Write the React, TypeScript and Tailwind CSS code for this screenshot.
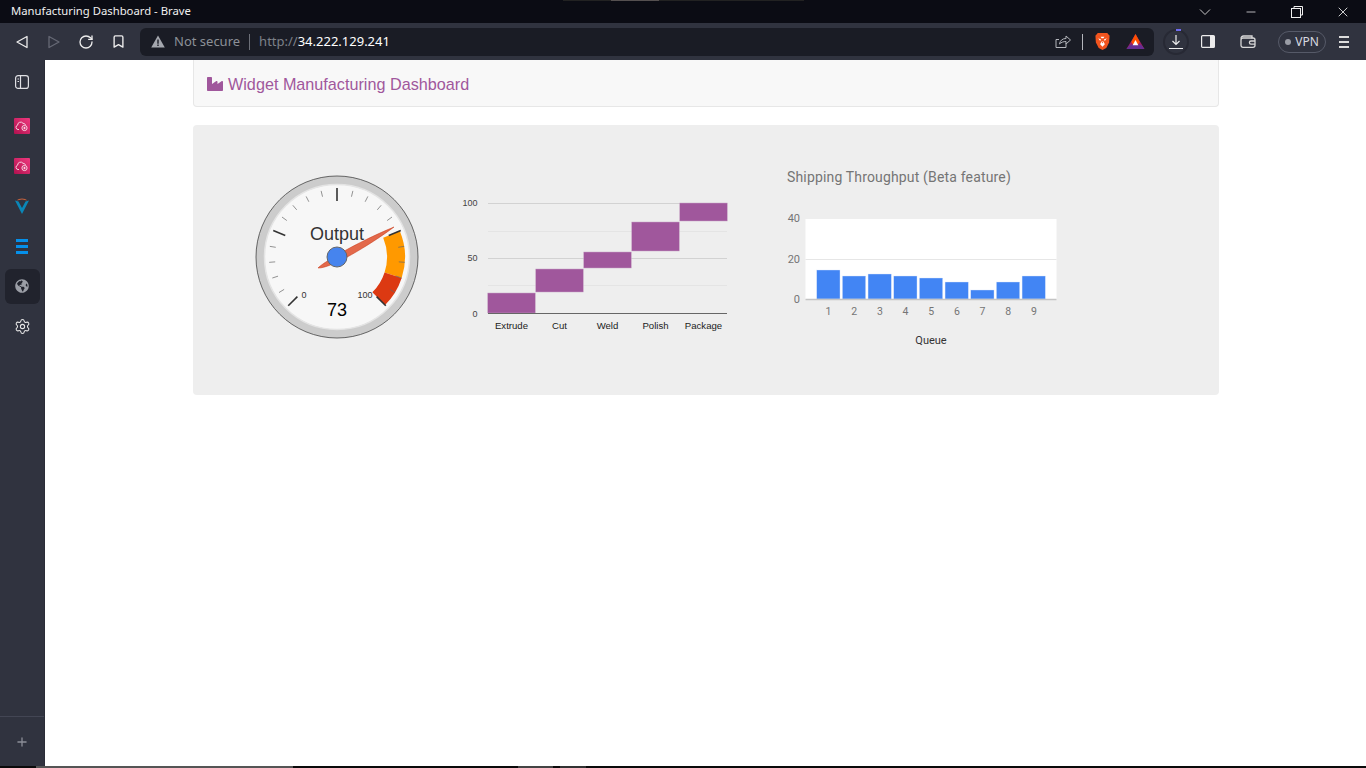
import { Bookmark, Minus, Plus, RotateCw, Settings, X } from "lucide-react";
import { FaGlobeAmericas, FaIndustry } from "react-icons/fa";

const UI_FONT = "[font-family:'Noto_Sans','Open_Sans',sans-serif]";

const waterfall = [
  { label: "Extrude", x: 488, top: 293, bottom: 313 },
  { label: "Cut", x: 536, top: 269, bottom: 292 },
  { label: "Weld", x: 584, top: 252, bottom: 268 },
  { label: "Polish", x: 632, top: 222, bottom: 251 },
  { label: "Package", x: 680, top: 203, bottom: 221 },
];

const queue = [15, 12, 13, 12, 11, 9, 5, 9, 12];

function ToolButton({ children }: { children: React.ReactNode }) {
  return <div className="flex h-8 w-8 shrink-0 items-center justify-center">{children}</div>;
}

function AwsIcon() {
  return (
    <div className="flex h-4 w-4 items-center justify-center rounded-[1px] bg-gradient-to-tr from-[#b0104f] to-[#f0387f]">
      <svg viewBox="0 0 16 16" className="h-4 w-4" fill="none" stroke="#f7d3e2" strokeWidth="1">
        <path d="M5 11.500H4a2.200 2.200 0 0 1-.4-4.300A3 3 0 0 1 9 5.300a2.500 2.500 0 0 1 2.500 1.700" />
        <circle cx="10.500" cy="10" r="2.600" />
        <path d="M9.300 10h2.400M10.500 8.800v2.400" />
      </svg>
    </div>
  );
}

function SideItem({ children, active }: { children: React.ReactNode; active?: boolean }) {
  return (
    <div className="flex h-10 items-center justify-center">
      <div className={`flex h-[35px] w-[35px] items-center justify-center rounded-md ${active ? "bg-[#21232d]" : ""}`}>
        {children}
      </div>
    </div>
  );
}

function TitleBar() {
  return (
    <div className={`relative flex h-[23px] items-center bg-[#0b0c14] pl-[11px] text-[11.300px] text-[#f0f0f0] ${UI_FONT}`}>
      <div className="absolute left-[563px] top-0 h-px w-[241px] bg-[#222222]" />
      <div className="absolute left-[611px] top-0 h-px w-[48px] bg-[#555050]" />
      <span className="flex-1 whitespace-nowrap">Manufacturing Dashboard - Brave</span>
      <svg viewBox="0 0 12 8" className="mr-[33px] h-2 w-3" fill="none" stroke="#c8c8c8" strokeWidth="1">
        <path d="M1 1.500 6 6.500l5-5" />
      </svg>
      <Minus size={14} strokeWidth={1.2} className="mr-[33px] text-white" />
      <svg viewBox="0 0 12 12" className="mr-[32px] h-3 w-3" fill="none" stroke="#f0f0f0" strokeWidth="1">
        <rect x="0.500" y="2.500" width="9" height="9" />
        <path d="M3 2.500V.500h8.500V9H9.500" />
      </svg>
      <X size={16} strokeWidth={1.2} className="mr-[15px] text-white" />
    </div>
  );
}

function ToolBar() {
  return (
    <div className={`flex h-[37px] items-center bg-[#30333f] pl-[6px] ${UI_FONT}`}>
      <ToolButton>
        <svg viewBox="0 0 14 14" className="h-[14px] w-[14px]" fill="none" stroke="#ececec" strokeWidth="1.300" strokeLinejoin="round">
          <path d="M12 1.500v11L2 7z" />
        </svg>
      </ToolButton>
      <ToolButton>
        <svg viewBox="0 0 14 14" className="h-[14px] w-[14px]" fill="none" stroke="#666975" strokeWidth="1.300" strokeLinejoin="round">
          <path d="M2 1.500v11L12 7z" />
        </svg>
      </ToolButton>
      <ToolButton>
        <RotateCw size={16} strokeWidth={2} className="text-[#ececec]" />
      </ToolButton>
      <ToolButton>
        <Bookmark size={15} strokeWidth={2.2} className="text-[#ececec]" />
      </ToolButton>

      <div className="ml-[6px] flex h-7 w-[1014px] shrink-0 items-center rounded-md bg-[#1a1c25] pl-[11px] text-[13px]">
        <svg viewBox="0 0 14 13" className="h-[13px] w-[14px]" fill="#a4a7ae">
          <path d="M7 .500 13.800 12.500H.200z" />
          <path d="M6.300 4.500h1.400v4.200H6.300zM6.300 9.600h1.400V11H6.300z" fill="#1a1c25" />
        </svg>
        <span className="ml-[9px] whitespace-nowrap text-[#8c9097]">Not secure</span>
        <div className="ml-[9px] h-[16px] w-px bg-[#6c6f78]" />
        <span className="ml-[9px] whitespace-nowrap text-[#7d8189]">http://</span>
        <span className="whitespace-nowrap text-white">34.222.129.241</span>

        <div className="ml-auto flex items-center">
          <svg viewBox="0 0 16 15" className="h-[15px] w-4" fill="none" stroke="#b4b6bc" strokeWidth="1">
            <path d="M11 9.500v4H1v-8h3" />
            <path d="M4.500 10c.5-3.500 3-5.500 6.500-5.500V2l4.500 4-4.500 4V7.500c-2.500 0-5 .8-6.500 2.500z" />
          </svg>
          <div className="ml-[11px] h-[16px] w-px bg-[#b4b6bc]" />
          <svg viewBox="0 0 18 20" className="ml-[11px] h-[19px] w-[17px]">
            <path d="M4 1h10l2.500 3-.5 7-3 6-4 2-4-2-3-6-.5-7z" fill="#f1541e" />
            <path d="M4.500 6.500 7.500 8 6.500 9.500zM13.500 6.500 10.500 8l1 1.500zM7 5h4l-1 1.500H8z" fill="#ffffff" />
            <path d="M8 10h2l1.500 3L9 15.500 6.500 13z" fill="#ffffff" />
            <path d="M8.200 10.500h1.600L9 12z" fill="#f1541e" />
          </svg>
          <svg viewBox="0 0 20 18" className="ml-[15px] mr-[9px] h-[17px] w-[19px]">
            <path d="M10 1 19.500 17H.500z" fill="#9e1f63" />
            <path d="M10 1 5.500 9.500 8 13h4l2.500-3.500z" fill="#ff5000" />
            <path d="M.500 17 4 12.500h12l3.500 4.500z" fill="#662d91" />
            <path d="M10 7.500 13 13H7z" fill="#ffffff" />
          </svg>
        </div>
      </div>

      <div className="ml-[6px] flex h-8 w-8 shrink-0 items-center justify-center">
        <div className="relative flex h-[26px] w-[26px] items-center justify-center rounded-full border-2 border-[#272934]">
          <svg viewBox="0 0 16 16" className="h-4 w-4" fill="none" stroke="#ececec" strokeWidth="1.200">
            <path d="M8 1v9M4.500 7 8 10.500 11.500 7M1 14.500h14" />
          </svg>
          <div className="absolute -top-[2px] left-[11px] h-[2px] w-[5px] bg-[#6f6cf0]" />
        </div>
      </div>
      <ToolButton>
        <svg viewBox="0 0 14 13" className="h-[13px] w-[14px]" fill="none" stroke="#ececec" strokeWidth="1.200">
          <rect x="0.600" y="0.600" width="12.800" height="11.800" rx="1" />
          <rect x="9" y="1" width="4" height="11" fill="#ececec" stroke="none" />
        </svg>
      </ToolButton>
      <div className="ml-2 flex h-8 w-8 shrink-0 items-center justify-center">
        <svg viewBox="0 0 16 13" className="h-[13px] w-4" fill="none" stroke="#d8d8d8" strokeWidth="1.300">
          <path d="M1 3.500C1 2 2 1 3.500 1H12v2.500" />
          <rect x="1" y="3" width="14" height="9.300" rx="2" />
          <path d="M15 6h-4a1.500 1.500 0 0 0 0 3.200h4" />
        </svg>
      </div>
      <div className="ml-[14px] flex h-[22px] w-[48px] shrink-0 items-center justify-center gap-[4px] rounded-full border border-[#565a68] text-[12px] text-[#d8dae0]">
        <div className="h-[6px] w-[6px] rounded-full bg-[#9a9da6]" />
        VPN
      </div>
      <div className="ml-[2px] flex h-8 w-8 shrink-0 flex-col items-center justify-center gap-[3px]">
        <div className="h-[2px] w-[10px] bg-[#dcdcdc]" />
        <div className="h-[2px] w-[10px] bg-[#dcdcdc]" />
        <div className="h-[2px] w-[10px] bg-[#dcdcdc]" />
      </div>
    </div>
  );
}

function SideBar() {
  return (
    <div className="flex w-[45px] shrink-0 flex-col border-r border-[#2a2c37] bg-[#30333f] pt-[2px]">
      <SideItem>
        <svg viewBox="0 0 16 14" className="h-[14px] w-4" fill="none" stroke="#dfe0e4" strokeWidth="1.200">
          <rect x="1.600" y="0.600" width="12.800" height="12.800" rx="2.500" />
          <path d="M6.500 1v12M3.500 4h1.500M3.500 6.500h1.500" />
        </svg>
      </SideItem>
      <div className="h-1" />
      <SideItem>
        <AwsIcon />
      </SideItem>
      <SideItem>
        <AwsIcon />
      </SideItem>
      <SideItem>
        <svg viewBox="0 0 16 18" className="h-[18px] w-4">
          <path d="M1 3.500 8 17l7-13.500-3.500 1L8 11 4.500 4.500z" fill="#0a87b8" />
          <path d="M2.500 3.500C5 .8 11 .8 13.500 3.500L8 2.500z" fill="#c4623d" />
        </svg>
      </SideItem>
      <SideItem>
        <div className="flex w-3 flex-col gap-[3px]">
          <div className="h-[3px] bg-[#0590ea]" />
          <div className="h-[3px] bg-[#0590ea]" />
          <div className="h-[3px] bg-[#0590ea]" />
        </div>
      </SideItem>
      <SideItem active>
        <FaGlobeAmericas size={14} className="text-[#9b9ea6]" />
      </SideItem>
      <SideItem>
        <Settings size={17} strokeWidth={1.500} className="text-[#e6e6e6]" />
      </SideItem>
      <div className="mt-auto flex h-[50px] items-center justify-center border-t border-[#434654]">
        <Plus size={14} strokeWidth={2.200} className="text-[#8b8e98]" />
      </div>
    </div>
  );
}

function GaugeChart() {
  const cx = 92;
  const cy = 92;
  const valueAt = (v: number, r: number) => {
    const a = ((v / 100) * 270 + 135) * (Math.PI / 180);
    return [cx + r * Math.cos(a), cy + r * Math.sin(a)];
  };
  const tick = (v: number, r1: number, r2: number) => {
    const [x1, y1] = valueAt(v, r1);
    const [x2, y2] = valueAt(v, r2);
    return `M${x1} ${y1}L${x2} ${y2}`;
  };
  const band = (a: number, b: number) => {
    const [x1, y1] = valueAt(a, 68);
    const [x2, y2] = valueAt(b, 68);
    const [x3, y3] = valueAt(b, 50);
    const [x4, y4] = valueAt(a, 50);
    return `M${x1} ${y1}A68 68 0 0 1 ${x2} ${y2}L${x3} ${y3}A50 50 0 0 0 ${x4} ${y4}Z`;
  };
  const minor = [];
  for (let v = 0; v <= 100; v += 5) if (v % 25 !== 0) minor.push(v);

  return (
    <svg viewBox="0 0 185 185" className="h-[185px] w-[185px] shrink-0">
      <circle cx={cx} cy={cy} r="81" fill="#cccccc" stroke="#444444" strokeWidth="0.800" />
      <circle cx={cx} cy={cy} r="72.500" fill="#f7f7f7" stroke="#e4e4e4" strokeWidth="1.500" />
      <path d={band(75, 90)} fill="#ff9900" />
      <path d={band(90, 100)} fill="#dc3912" />
      {minor.map((v) => (
        <path key={v} d={tick(v, 68, 62)} stroke="#666666" strokeWidth="0.700" />
      ))}
      {[0, 25, 50, 75, 100].map((v) => (
        <path key={v} d={tick(v, 69, 56)} stroke="#333333" strokeWidth="1.600" />
      ))}
      <text x={cx} y="75" textAnchor="middle" fontSize="18" fill="#333333" fontFamily="Liberation Sans, sans-serif">
        Output
      </text>
      <text x="59" y="133" textAnchor="middle" fontSize="9" fill="#333333" fontFamily="Liberation Sans, sans-serif">
        0
      </text>
      <text x="120" y="133" textAnchor="middle" fontSize="9" fill="#333333" fontFamily="Liberation Sans, sans-serif">
        100
      </text>
      <text x={cx} y="150.500" textAnchor="middle" fontSize="18" fill="#000000" fontFamily="Liberation Sans, sans-serif">
        73
      </text>
      <path d="M73 103C76 99 110 78 149 62C125 80 85 104 73 103Z" fill="#dc3912" fillOpacity="0.750" stroke="#c63310" strokeWidth="0.500" />
      <circle cx={cx} cy={cy} r="10" fill="#4684ee" stroke="#666666" strokeWidth="1" />
    </svg>
  );
}

function WaterfallChart() {
  const ox = 450;
  const oy = 190;
  return (
    <svg viewBox="0 0 290 150" className="h-[150px] w-[290px] shrink-0">
      {[203, 258, 231, 285].map((y, i) => (
        <path key={y} d={`M${488 - ox} ${y - oy + 0.500}H${727 - ox}`} stroke={i < 2 ? "#d2d2d2" : "#e4e4e4"} strokeWidth="1" />
      ))}
      {waterfall.map((bar) => (
        <rect
          key={bar.label}
          x={bar.x - ox - 0.250}
          y={bar.top - oy}
          width="47.500"
          height={bar.bottom - bar.top}
          fill="#a0579c"
          stroke="#c7a3c5"
          strokeWidth="0.500"
        />
      ))}
      <path d={`M${488 - ox} ${313.500 - oy}H${727 - ox}`} stroke="#666666" strokeWidth="1" />
      {[
        ["100", 206],
        ["50", 261],
        ["0", 317],
      ].map(([t, y]) => (
        <text key={t} x="27.500" y={Number(y) - oy} textAnchor="end" fontSize="9" fill="#444444" fontFamily="Liberation Sans, sans-serif">
          {t}
        </text>
      ))}
      {waterfall.map((bar) => (
        <text key={bar.label} x={bar.x - ox + 23.500} y="139" textAnchor="middle" fontSize="9.600" fill="#222222" fontFamily="Liberation Sans, sans-serif">
          {bar.label}
        </text>
      ))}
    </svg>
  );
}

function ShippingChart() {
  return (
    <div className="flex w-[300px] shrink-0 flex-col">
      <h2 className="ml-[12px] h-[41px] whitespace-nowrap pt-[2px] font-['Roboto',sans-serif] text-[14px] leading-[20px] tracking-[0.160px] text-[#757575]">
        Shipping Throughput (Beta feature)
      </h2>
      <svg viewBox="0 0 300 149" className="h-[149px] w-[300px]">
        <rect x="30.500" y="13" width="251" height="80.500" fill="#ffffff" />
        <path d="M30.500 53.500H281.500" stroke="#e6e6e6" strokeWidth="1" />
        {queue.map((v, i) => (
          <rect key={i} x={41.700 + i * 25.670} y={94 - v * 2} width="23.300" height={v * 2 - 1} fill="#4285f4" stroke="#dbe6fb" strokeWidth="0.400" />
        ))}
        <path d="M30.500 93.500H281.500" stroke="#c4c4c4" strokeWidth="1.500" />
        {[
          ["40", 16],
          ["20", 57],
          ["0", 97],
        ].map(([t, y]) => (
          <text key={t} x="25" y={y} textAnchor="end" fontSize="11" fill="#757575" fontFamily="Roboto, sans-serif">
            {t}
          </text>
        ))}
        {queue.map((_, i) => (
          <text key={i} x={53.500 + i * 25.670} y="109" textAnchor="middle" fontSize="10.500" fill="#757575" fontFamily="Roboto, sans-serif">
            {i + 1}
          </text>
        ))}
        <text x="156" y="138" textAnchor="middle" fontSize="11" fill="#333333" fontFamily="Roboto, sans-serif">
          Queue
        </text>
      </svg>
    </div>
  );
}

export default function App() {
  return (
    <div className="flex h-screen flex-col overflow-hidden bg-white">
      <TitleBar />
      <ToolBar />
      <div className="flex min-h-0 flex-1">
        <SideBar />
        <main className="min-w-0 flex-1 pl-[148px]">
          <div className="flex h-[47px] w-[1026px] items-center rounded-b border border-t-0 border-[#e7e7e7] bg-[#f8f8f8] pl-[13px] pt-[2px] font-['Liberation_Sans',sans-serif] text-[16.200px] text-[#a0579c]">
            <FaIndustry size={16} className="-mt-[1px]" />
            <span className="ml-[5px] whitespace-nowrap">Widget Manufacturing Dashboard</span>
          </div>
          <div className="mt-[18px] flex h-[270px] w-[1026px] items-start rounded bg-[#eeeeee] pl-[52px] pt-[40px]">
            <GaugeChart />
            <div className="ml-[20px] mt-[25px]">
              <WaterfallChart />
            </div>
            <div className="ml-[35px]">
              <ShippingChart />
            </div>
          </div>
        </main>
      </div>
      <div className="flex h-[2px] shrink-0 bg-[#0a0a0a]">
        <div className="ml-[36px] w-[257px] bg-[#555555]" />
        <div className="ml-[225px] w-[35px] bg-[#444444]" />
        <div className="ml-[7px] w-[26px] bg-[#333333]" />
      </div>
    </div>
  );
}
